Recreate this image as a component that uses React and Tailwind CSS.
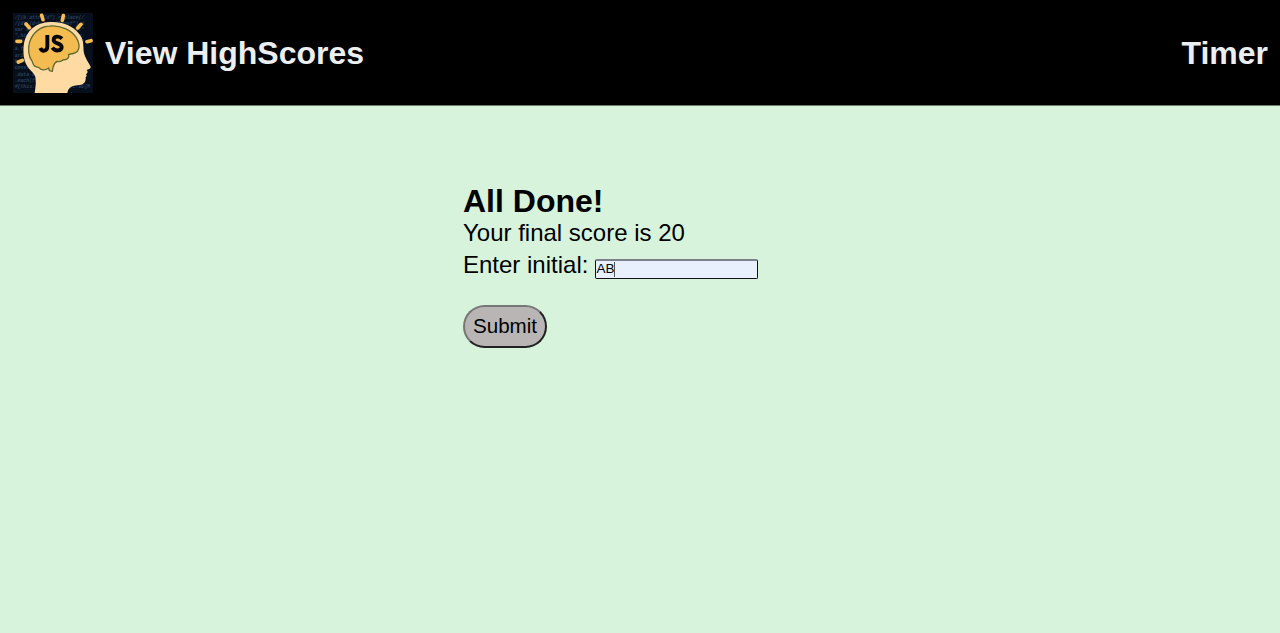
const codeLines = [
  [33, '/[(b.attr("d").replace(/'],
  [50, '/(d||(d=b.attr("href"),d'],
  [68, 'var e=a(this)[0],f="act"'],
  [87, '",hide(e).trigger({type:'],
  [106, 'b.Event("show.bs.tab")})'],
  [125, 'a.fn.tab=b,this.each(fun'],
  [146, 'aria-expanded",!0),b?(b['],
  [165, 'href).addClass("fade"),c'],
  [184, 'constructor=c,a.fn.tab.n'],
  [203, '.data-api",e).on("click.'],
  [222, '.each(function(){var d=a'],
  [241, '#{this.options.tar},c.DE{M'],
];

function Logo() {
  return (
    <svg className="h-20 w-20 shrink-0" viewBox="15 15 240 240" aria-label="JS quiz logo">
      <rect x="15" y="15" width="240" height="240" fill="#080f1c" />
      <g fill="#3a5d80" opacity="0.65" fontFamily="Liberation Mono, monospace" fontSize="14.5" fontStyle="italic">
        {codeLines.map(([y, t]) => (
          <text key={y} x="20" y={y}>{t}</text>
        ))}
      </g>
      <g stroke="#f7bd4f" strokeWidth="11" strokeLinecap="round">
        <path d="M27 100H38M54 48L64 59M101 22L105 35M166 23L163 37M219 49L209 60M249 98L237 101M31 162L43 157" />
      </g>
      <path
        d="M80 255C83 237 85 221 82 207C79 196 66 188 58 175C47 157 44 133 48 106C55 68 84 43 126 42C168 40 203 57 220 87C230 107 223 124 230 142C234 154 243 167 248 176C249 182 240 184 236 186C240 190 240 195 234 198C237 203 236 205 233 208C234 220 229 228 219 230L198 233C184 236 179 247 178 255Z"
        fill="#ffdba3"
      />
      <path
        d="M73 161C61 146 59 121 65 102C74 74 97 55 126 54C158 52 190 65 205 89C213 103 216 119 209 129C203 137 192 137 182 139C185 149 177 157 166 155C161 160 156 162 147 160C139 164 137 170 135 178L133 190L124 188L122 180C111 188 99 187 92 178C83 178 75 172 73 161Z"
        fill="#f3bb50"
        stroke="#606c30"
        strokeWidth="4"
        strokeLinejoin="round"
      />
      <g fill="none" stroke="#050505" strokeWidth="11.5">
        <path d="M118 81V115C118 131 102 132 97 120" />
        <path d="M162 92C153 83 137 84 137 96C137 109 161 103 161 117C161 130 141 131 133 119" />
      </g>
    </svg>
  );
}

export default function App() {
  return (
    <div className="min-h-screen bg-[#d7f3dc] font-['Liberation_Sans',Arial,sans-serif] text-black">
      <header className="flex h-[106px] items-center border-b border-[#6c7a6e] bg-black pr-3 pl-[13px] text-[32px] leading-9 font-bold text-[#eceff1]">
        <Logo />
        <h1 className="ml-3">View HighScores</h1>
        <h2 className="ml-auto">Timer</h2>
      </header>
      <main className="ml-[463px] flex flex-col items-start pt-[77px] text-2xl leading-8">
        <h2 className="text-[32px] leading-9 font-bold">All Done!</h2>
        <p className="-mt-[2px]">Your final score is 20</p>
        <div className="flex items-start">
          <label>Enter initial:</label>
          <div className="mt-[10px] ml-[7px] flex h-5 w-[163px] items-center rounded-[2px] border border-[#111118] border-t-2 border-t-[#7c808a] bg-[#e8f0fe] px-px pb-px text-[13.5px] leading-4">
            <span className="-ml-px">AB</span>
            <span className="h-[15px] w-px bg-[#555]" />
          </div>
        </div>
        <button className="mt-[23.5px] h-[43.5px] w-[84px] rounded-[22px] border-2 border-t-[#777] border-r-[#222] border-b-[#222] border-l-[#777] bg-[#b8b5b4] text-[20.6px] leading-none">
          Submit
        </button>
      </main>
    </div>
  );
}
